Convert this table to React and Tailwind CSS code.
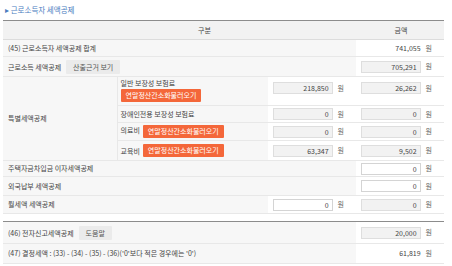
import React from "react";

const font = { fontFamily: '"Noto Sans CJK KR", "Noto Sans", sans-serif' };

function Amount({ value, gray = true, box = true }) {
  return (
    <div className="flex items-center justify-end pr-[12px]">
      {box ? (
        <div
          className={`w-[60px] h-[12px] border text-right pr-[3px] leading-[10px] ${
            gray ? "bg-[#f2f2f2] border-[#dedede]" : "bg-white border-[#d4d4d4]"
          }`}
        >
          {value}
        </div>
      ) : (
        <span>{value}</span>
      )}
      <span className="ml-[5px] text-[#666]">원</span>
    </div>
  );
}

function OrangeBtn() {
  return (
    <span className="inline-block bg-[#f4673a] text-white text-[7px] px-[5px] h-[13px] leading-[13px] rounded-[1px]">
      연말정산간소화불러오기
    </span>
  );
}

function GrayBtn({ children }) {
  return (
    <span className="inline-block bg-[#ebebeb] text-[#555] px-[7px] h-[14px] leading-[14px] rounded-[1px]">
      {children}
    </span>
  );
}

export default function App() {
  const lab = "bg-[#f7f7f7] border-b border-[#e8e8e8] px-[5px] align-middle";
  const amt = "bg-white border-b border-[#e8e8e8] align-middle";
  return (
    <div className="w-[452px] h-[266px] bg-white text-[7px] text-[#444] overflow-hidden" style={font}>
      <div className="h-[20px] pl-[5px] pt-[5px] text-[7.5px] text-[#4a7cc0] leading-[10px]">▸ 근로소득자 세액공제</div>
      <div className="pl-[3px]">
        <table className="w-[441px] border-collapse table-fixed border-t border-[#8c8c8c]">
          <colgroup>
            <col className="w-[114px]" />
            <col className="w-[151px]" />
            <col className="w-[88px]" />
            <col className="w-[88px]" />
          </colgroup>
          <tbody>
            <tr className="h-[19px] bg-[#f2f2f2]">
              <td colSpan={3} className="text-center border-b border-[#dcdcdc] pl-[50px]">구분</td>
              <td className="text-center border-b border-[#dcdcdc] pl-[2px]">금액</td>
            </tr>
            <tr className="h-[17px]">
              <td colSpan={3} className={lab}>(45) 근로소득자 세액공제 합계</td>
              <td className={amt}><Amount value="741,055" box={false} /></td>
            </tr>
            <tr className="h-[20px]">
              <td colSpan={3} className={lab}>
                <span>근로소득 세액공제</span>
                <span className="ml-[5px]"><GrayBtn>산출근거 보기</GrayBtn></span>
              </td>
              <td className={amt}><Amount value="705,291" /></td>
            </tr>
            <tr className="h-[29px]">
              <td rowSpan={4} className={lab}>특별세액공제</td>
              <td className="bg-[#f7f7f7] border-b border-l border-[#e8e8e8] pl-[3px] align-top pt-[1px]">
                <div className="leading-[10px]">일반 보장성 보험료</div>
                <div className="mt-[1px]"><OrangeBtn /></div>
              </td>
              <td className="bg-white border-b border-[#e8e8e8] align-top pt-[5px]"><Amount value="218,850" /></td>
              <td className="bg-white border-b border-[#e8e8e8] align-top pt-[5px]"><Amount value="26,262" /></td>
            </tr>
            <tr className="h-[17px]">
              <td className="bg-[#f7f7f7] border-b border-l border-[#e8e8e8] pl-[3px]">장애인전용 보장성 보험료</td>
              <td className={amt}><Amount value="0" /></td>
              <td className={amt}><Amount value="0" /></td>
            </tr>
            <tr className="h-[18px]">
              <td className="bg-[#f7f7f7] border-b border-l border-[#e8e8e8] pl-[3px]">
                <div className="flex items-start">
                  <span className="leading-[10px]">의료비</span>
                  <span className="ml-[3px]"><OrangeBtn /></span>
                </div>
              </td>
              <td className={amt}><Amount value="0" /></td>
              <td className={amt}><Amount value="0" /></td>
            </tr>
            <tr className="h-[20px]">
              <td className="bg-[#f7f7f7] border-b border-l border-[#e8e8e8] pl-[3px]">
                <div className="flex items-start">
                  <span className="leading-[10px] mt-[2px]">교육비</span>
                  <span className="ml-[3px]"><OrangeBtn /></span>
                </div>
              </td>
              <td className={amt}><Amount value="63,347" /></td>
              <td className={amt}><Amount value="9,502" /></td>
            </tr>
            <tr className="h-[16px]">
              <td colSpan={3} className={lab}>주택자금차입금 이자세액공제</td>
              <td className={amt}><Amount value="0" gray={false} /></td>
            </tr>
            <tr className="h-[19px]">
              <td colSpan={3} className={lab}>외국납부 세액공제</td>
              <td className={amt}><Amount value="0" gray={false} /></td>
            </tr>
            <tr className="h-[18px]">
              <td colSpan={2} className={lab}>월세액 세액공제</td>
              <td className={amt}><Amount value="0" gray={false} /></td>
              <td className={amt}><Amount value="0" /></td>
            </tr>
          </tbody>
        </table>

        <table className="mt-[7px] w-[441px] border-collapse table-fixed border-t border-[#8c8c8c]">
          <colgroup>
            <col className="w-[353px]" />
            <col className="w-[88px]" />
          </colgroup>
          <tbody>
            <tr className="h-[22px]">
              <td className={lab}>
                <span>(46) 전자신고세액공제</span>
                <span className="ml-[5px]"><GrayBtn>도움말</GrayBtn></span>
              </td>
              <td className={amt}><Amount value="20,000" /></td>
            </tr>
            <tr className="h-[20px]">
              <td className={lab}>(47) 결정세액 : (33) - (34) - (35) - (36)('0'보다 적은 경우에는 '0')</td>
              <td className={amt}><Amount value="61,819" box={false} /></td>
            </tr>
          </tbody>
        </table>
      </div>
    </div>
  );
}
